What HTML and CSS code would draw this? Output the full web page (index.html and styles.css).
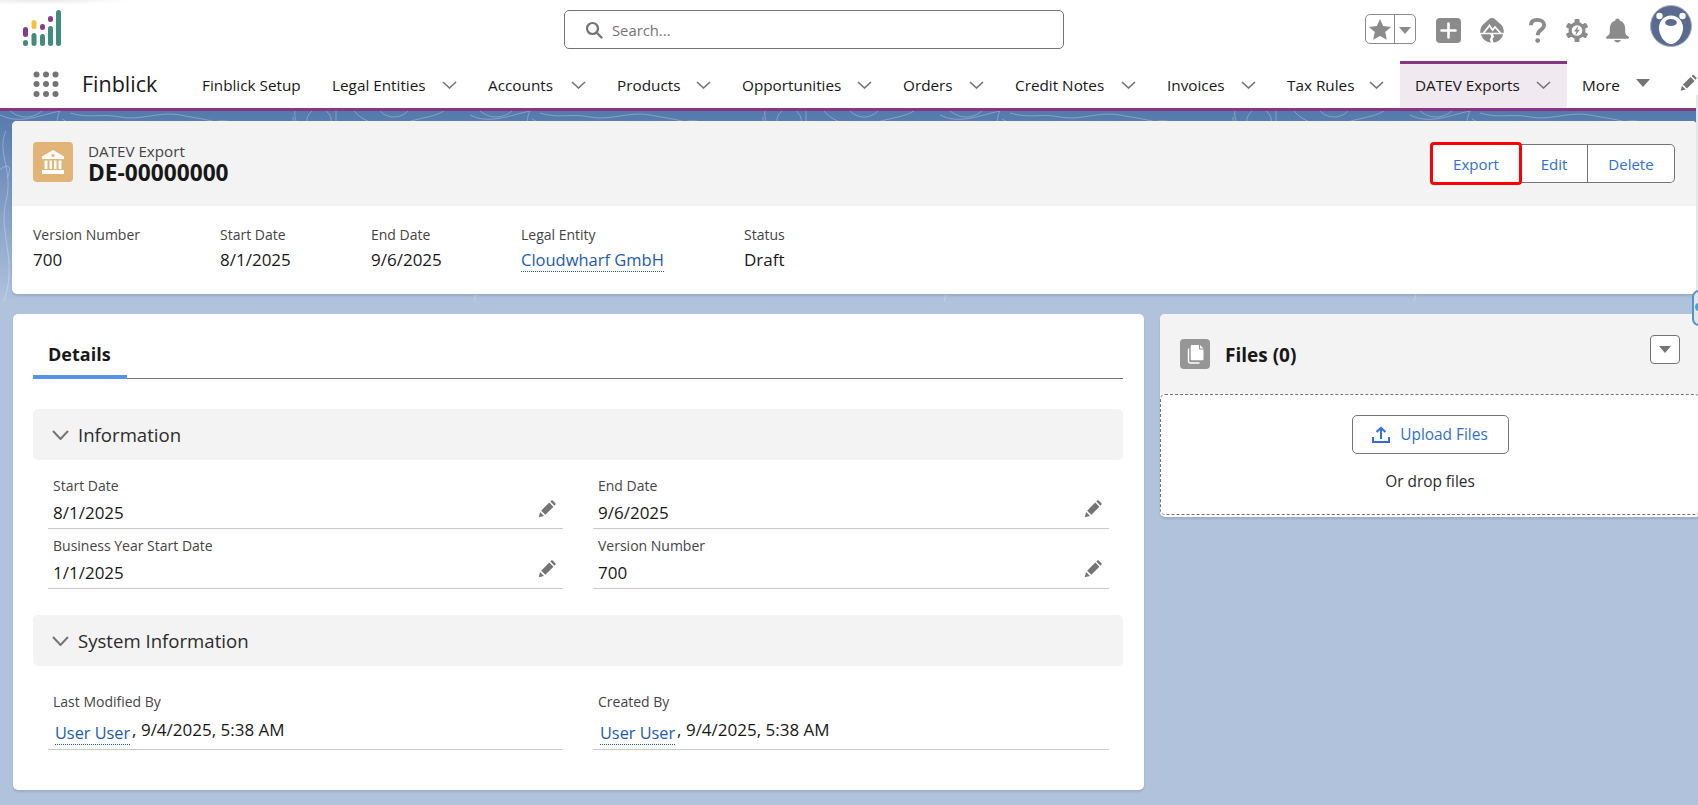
FILE: index.html
```html
<!DOCTYPE html>
<html lang="en">
<head>
<meta charset="utf-8">
<title>DATEV Export DE-00000000</title>
<link rel="stylesheet" href="styles.css">
</head>
<body>
<div class="app">
  <header class="topbar">
    <div class="logo-cell">
      <svg class="logo" width="40" height="38" viewBox="0 0 40 38">
        <g fill="none" stroke-width="5" stroke-linecap="round">
          <path stroke="#8a3a8c" d="M3.5 20.5v5"/>
          <path stroke="#438b7e" d="M3.5 33.5v1"/>
          <path stroke="#f2c23e" d="M12 13.5v4"/>
          <path stroke="#438b7e" d="M12 26.500v8"/>
          <path stroke="#8a3a8c" d="M20.500 17.500v1"/>
          <path stroke="#438b7e" d="M20.500 27.500v7"/>
          <path stroke="#8a3a8c" d="M28.500 9.500v1"/>
          <path stroke="#438b7e" d="M28.500 19.500v15"/>
          <path stroke="#438b7e" d="M36.500 3.500v31"/>
        </g>
      </svg>
    </div>
    <div class="search">
      <svg class="search-icon" width="18" height="18" viewBox="0 0 18 18"><circle cx="7.500" cy="7.500" r="5.500" fill="none" stroke="#747474" stroke-width="2.200"/><path d="M11.500 11.500l5 5" stroke="#747474" stroke-width="2.400" stroke-linecap="round"/></svg>
      <span class="search-text">Search...</span>
    </div>
    <div class="actions">
      <div class="fav">
        <span class="fav-star"><svg width="22" height="21" viewBox="0 0 22 21"><path fill="#8b8b8b" d="M11 0l3.200 7.100 7.800.8-5.800 5.200 1.600 7.700L11 16.900l-6.800 3.900 1.600-7.700L0 7.900l7.800-.8z"/></svg></span>
        <span class="fav-caret"></span>
      </div>
      <svg class="ic-plus" width="25" height="25" viewBox="0 0 25 25"><rect width="25" height="25" rx="4" fill="#8b8b8b"/><path d="M12.500 5.500v14M5.500 12.500h14" stroke="#fff" stroke-width="2.600" stroke-linecap="round"/></svg>
      <svg class="ic-trail" width="24" height="25" viewBox="0 0 24 25"><path fill="#8b8b8b" d="M12 0c2.500 0 3.500 1.500 5 3 2 2 5 3.500 6 6.500.6 1.800.9 3.500.9 5.300H.1C.1 13 .4 11.300 1 9.500 2 6.500 5 5 7 3c1.500-1.500 2.500-3 5-3z"/><path fill="#8b8b8b" d="M.9 16.300h9.400l1 2.500-1.500 2.500 1 3.300C6 24 2.300 21 .9 16.300zM13 16.300h10.200c-1.300 4.700-5 7.800-9.700 8.300l-1-3.300 1.600-2.500z"/><path fill="none" stroke="#fff" stroke-width="1.800" d="M3.500 15l6-7.500 3 4.500 2.500-3 5.500 6"/></svg>
      <svg class="ic-help" width="17" height="25" viewBox="0 0 17 25"><path fill="none" stroke="#8b8b8b" stroke-width="3.800" d="M1.900 7.200c0-3.700 2.800-5.300 6.400-5.300 3.900 0 6.800 2 6.800 5.200 0 4.900-6.400 4.700-6.400 10.200"/><circle cx="8.700" cy="22.600" r="2.400" fill="#8b8b8b"/></svg>
      <svg class="ic-gear" width="22" height="23" viewBox="0 0 22 23"><g fill="#8b8b8b"><circle cx="11" cy="11.500" r="8.500"/><rect x="8.500" y="0" width="5" height="23" rx="1"/><rect x="8.500" y="0" width="5" height="23" rx="1" transform="rotate(60 11 11.500)"/><rect x="8.500" y="0" width="5" height="23" rx="1" transform="rotate(120 11 11.500)"/></g><circle cx="11" cy="11.500" r="5.300" fill="#fff"/><path fill="#8b8b8b" d="M12.300 6.800 8 12.500h2.400l-1 4.300 4.400-6h-2.500z"/></svg>
      <svg class="ic-bell" width="23" height="25" viewBox="0 0 24 25"><path fill="#8b8b8b" d="M12 0c1.300 0 2.300.9 2.500 2.200C18 3.300 20 6.300 20 10v4c0 2 1.200 3.300 3 4.500.8.500 1 1 1 1.500s-.4 1-1 1H1c-.6 0-1-.5-1-1s.2-1 1-1.500C2.800 17.300 4 16 4 14v-4c0-3.700 2-6.700 5.500-7.800C9.700.9 10.700 0 12 0z"/><path fill="#8b8b8b" d="M8.500 22.500h7c-.5 1.500-2 2.500-3.500 2.500s-3-1-3.500-2.500z"/></svg>
      <svg class="avatar" width="42" height="42" viewBox="0 0 42 42"><circle cx="21" cy="21" r="20.500" fill="#5a6b8f" stroke="#a8afbd"/><circle cx="9.500" cy="11" r="3.200" fill="#fff"/><circle cx="32.500" cy="11" r="3.200" fill="#fff"/><path fill="#fff" d="M21 10.500c7 0 11 5 12 11 .7 7-5 17.500-12 17.500S8.300 28.500 9 21.500c1-6 5-11 12-11z"/><ellipse cx="21" cy="17.500" rx="5.800" ry="3.600" fill="#5a6b8f"/></svg>
    </div>
  </header>

  <nav class="nav">
    <div class="launcher">
      <svg width="26" height="26" viewBox="0 0 26 26" fill="#747474"><circle cx="3.500" cy="3.500" r="3"/><circle cx="13" cy="3.500" r="3"/><circle cx="22.500" cy="3.500" r="3"/><circle cx="3.500" cy="13" r="3"/><circle cx="13" cy="13" r="3"/><circle cx="22.500" cy="13" r="3"/><circle cx="3.500" cy="23" r="3"/><circle cx="13" cy="23" r="3"/><circle cx="22.500" cy="23" r="3"/></svg>
      <span class="app-name">Finblick</span>
    </div>
    <div class="tabs">
      <a class="tab">Finblick Setup</a>
      <a class="tab">Legal Entities<svg class="chev" viewBox="0 0 15 8"><path d="M1 1l6.500 6L14 1"/></svg></a>
      <a class="tab">Accounts<svg class="chev" viewBox="0 0 15 8"><path d="M1 1l6.500 6L14 1"/></svg></a>
      <a class="tab">Products<svg class="chev" viewBox="0 0 15 8"><path d="M1 1l6.500 6L14 1"/></svg></a>
      <a class="tab">Opportunities<svg class="chev" viewBox="0 0 15 8"><path d="M1 1l6.500 6L14 1"/></svg></a>
      <a class="tab">Orders<svg class="chev" viewBox="0 0 15 8"><path d="M1 1l6.500 6L14 1"/></svg></a>
      <a class="tab">Credit Notes<svg class="chev" viewBox="0 0 15 8"><path d="M1 1l6.500 6L14 1"/></svg></a>
      <a class="tab">Invoices<svg class="chev" viewBox="0 0 15 8"><path d="M1 1l6.500 6L14 1"/></svg></a>
      <a class="tab">Tax Rules<svg class="chev" viewBox="0 0 15 8"><path d="M1 1l6.500 6L14 1"/></svg></a>
      <a class="tab tab-active">DATEV Exports<svg class="chev" viewBox="0 0 15 8"><path d="M1 1l6.500 6L14 1"/></svg></a>
      <a class="tab tab-more">More<span class="more-caret"></span></a>
      <svg class="nav-pencil" width="17" height="18" viewBox="0 0 24 24"><use href="#pencil"/></svg>
    </div>
  </nav>

  <main class="main">
    <svg class="contours" width="1698" height="210" aria-hidden="true">
      <defs>
        <pattern id="topo" width="470" height="210" patternUnits="userSpaceOnUse">
          <g fill="none" stroke="#fff" stroke-opacity=".28" stroke-width="1">
            <path d="M10 0c10 8 22 8 32 0"/>
            <path d="M0 4c20 10 40 0 60-4"/>
            <path d="M60 0c-6 10 2 22-14 30"/>
            <path d="M62 8c10 8 30 2 50 8s30-6 50-4 30 6 48 0 30 2 40 8"/>
            <path d="M70 2c20 6 30 0 50 4s40-6 60-2 30 4 50 12"/>
            <path d="M295 0c-2 8 6 18 3 20s-5-8-5-14"/>
            <path d="M312 0a12 12 0 0 0 14 20 12 12 0 0 0 0-20"/>
            <path d="M336 0v20"/>
            <path d="M354 0c10 12 30 18 50 12s30-6 40-12"/>
            <path d="M380 0c8 8 20 8 28 0"/>
            <path d="M6 20c-10 20 8 40 0 70s12 60-2 100"/>
            <path d="M-2 60c10-8 14-6 10 6"/>
          </g>
        </pattern>
      </defs>
      <rect width="1698" height="210" fill="url(#topo)"/>
    </svg>

    <section class="card highlights">
      <div class="hl-head">
        <div class="hl-title">
          <svg class="obj-icon" width="40" height="40" viewBox="0 0 40 40"><rect width="40" height="40" rx="4" fill="#e2b477"/><path fill="#fff" d="M20 8l11 6.500V17H9v-2.500z"/><circle cx="20" cy="13.500" r="1.600" fill="#e2b477"/><path fill="#fff" d="M11.500 18.500h3V27h-3zM16.500 18.500h2.500V27h-2.500zM21 18.500h2.500V27H21zM25.500 18.500h3V27h-3zM9 28h22v4H9z"/></svg>
          <div class="hl-text">
            <div class="hl-kind">DATEV Export</div>
            <h1 class="hl-name">DE-00000000</h1>
          </div>
        </div>
        <div class="btn-group">
          <button class="btn btn-export">Export</button>
          <button class="btn btn-edit">Edit</button>
          <button class="btn btn-delete">Delete</button>
        </div>
      </div>
      <div class="hl-fields">
        <div><div class="lbl">Version Number</div><div class="val">700</div></div>
        <div><div class="lbl">Start Date</div><div class="val">8/1/2025</div></div>
        <div><div class="lbl">End Date</div><div class="val">9/6/2025</div></div>
        <div><div class="lbl">Legal Entity</div><div class="val val-link"><a class="link">Cloudwharf GmbH</a></div></div>
        <div><div class="lbl">Status</div><div class="val">Draft</div></div>
      </div>
    </section>

    <div class="columns">
      <section class="card details">
        <div class="tabbar"><span class="dtab">Details</span></div>

        <div class="sec-head">
          <svg class="sec-chev" viewBox="0 0 17 10"><path d="M1 1l7.500 8L16 1"/></svg>
          <span>Information</span>
        </div>
        <div class="fields">
          <div class="field"><div class="lbl">Start Date</div><div class="val">8/1/2025</div><svg class="pencil" width="18" height="18" viewBox="0 0 24 24"><use href="#pencil"/></svg></div>
          <div class="field"><div class="lbl">End Date</div><div class="val">9/6/2025</div><svg class="pencil" width="18" height="18" viewBox="0 0 24 24"><use href="#pencil"/></svg></div>
          <div class="field"><div class="lbl">Business Year Start Date</div><div class="val">1/1/2025</div><svg class="pencil" width="18" height="18" viewBox="0 0 24 24"><use href="#pencil"/></svg></div>
          <div class="field"><div class="lbl">Version Number</div><div class="val">700</div><svg class="pencil" width="18" height="18" viewBox="0 0 24 24"><use href="#pencil"/></svg></div>
        </div>

        <div class="sec-head sec-system">
          <svg class="sec-chev" viewBox="0 0 17 10"><path d="M1 1l7.500 8L16 1"/></svg>
          <span>System Information</span>
        </div>
        <div class="fields fields-system">
          <div class="field field-sys"><div class="lbl">Last Modified By</div><div class="val val-sys"><a class="link">User User</a><span class="comma">,</span> 9/4/2025, 5:38 AM</div></div>
          <div class="field field-sys"><div class="lbl">Created By</div><div class="val val-sys"><a class="link">User User</a><span class="comma">,</span> 9/4/2025, 5:38 AM</div></div>
        </div>
      </section>

      <section class="card files">
        <div class="files-head">
          <svg class="files-icon" width="30" height="30" viewBox="0 0 30 30"><rect width="30" height="30" rx="4" fill="#969696"/><path fill="#fff" d="M12 6h7v4.500h4.500V20c0 .8-.6 1.300-1.300 1.300H12c-.7 0-1.300-.5-1.300-1.300V7.300C10.700 6.500 11.300 6 12 6zM20 6l3.500 3.500H20z"/><path fill="none" stroke="#fff" stroke-width="1.400" d="M8.500 9.500v12.800c0 1 .8 1.700 1.700 1.700h9.300"/></svg>
          <h2 class="files-title">Files (0)</h2>
          <button class="menu-btn"><span class="caret"></span></button>
        </div>
        <div class="drop">
          <button class="upload">
            <svg width="18" height="18" viewBox="0 0 18 18"><path fill="none" stroke="#2f6fd6" stroke-width="2" d="M1 11v5h16v-5"/><path fill="none" stroke="#2f6fd6" stroke-width="2" d="M9 13V2M4.500 6L9 1.800 13.500 6"/></svg>
            <span>Upload Files</span>
          </button>
          <div class="drop-text">Or drop files</div>
        </div>
      </section>
    </div>

    <div class="edge-strip"></div>
    <div class="edge-handle"><span class="edge-dot"></span></div>
  </main>
</div>
<svg width="0" height="0" class="defs"><defs><g id="pencil" fill="#747474"><path d="M1 23l1.800-7 5.200 5.200z"/><path d="M4.200 14.200 15 3.400l5.600 5.600L9.800 19.800z"/><path d="M16.500 2l1-1c.7-.7 1.700-.7 2.400 0l3.100 3.100c.7.700.7 1.700 0 2.400l-1 1z"/></g></defs></svg>
</body>
</html>
```

FILE: styles.css
```css
* { box-sizing: border-box; }
html, body { margin: 0; padding: 0; }
body {
  font-family: "Open Sans", "Noto Sans", sans-serif;
  color: #181818;
  background: #b0c2dc;
  overflow: hidden;
}
.defs { position: absolute; }
.app { width: 1698px; height: 805px; display: flex; flex-direction: column; overflow: hidden; }

/* top bar */
.topbar {
  height: 61px;
  flex: none;
  display: grid;
  grid-template-columns: 564px 500px 1fr;
  background: #fff radial-gradient(ellipse 90px 5px at 40px 0, #e8e8e8, #fff);
}
.logo-cell { padding: 9px 0 0 22px; }
.logo { display: block; }
.search {
  margin-top: 10px;
  height: 39px;
  border: 1px solid #747474;
  border-radius: 5px;
  display: flex;
  align-items: center;
  padding-left: 20px;
}
.search-icon { flex: none; }
.search-text { margin: 1px 0 0 9px; font-size: 14.800px; color: #747474; }
.actions { display: flex; align-items: flex-start; padding-left: 301px; }
.fav {
  margin-top: 14px;
  width: 51px;
  height: 30px;
  border: 1px solid #8b8b8b;
  border-radius: 5px;
  display: flex;
}
.fav-star { width: 29px; display: flex; align-items: center; justify-content: center; border-right: 1px solid #8b8b8b; }
.fav-caret { width: 0; height: 0; margin: 12px 0 0 4px; border: 6px solid transparent; border-top: 7px solid #8b8b8b; border-bottom: 0; }
.ic-plus { margin: 18px 0 0 20px; }
.ic-trail { margin: 18px 0 0 19px; }
.ic-help { margin: 18px 0 0 25px; }
.ic-gear { margin: 19px 0 0 20px; }
.ic-bell { margin: 18px 0 0 18px; }
.avatar { margin: 5px 0 0 21px; }

/* nav */
.nav {
  height: 50px;
  flex: none;
  display: flex;
  background: #fff;
  border-bottom: 3px solid #85387f;
}
.launcher { width: 187px; flex: none; display: flex; align-items: center; padding: 0 0 2px 33px; }
.app-name { margin-left: 23px; font-size: 21.500px; line-height: 28px; color: #181818; }
.tabs {
  flex: 1;
  display: grid;
  grid-template-columns: 130px 156px 129px 125px 161px 112px 152px 120px 128px 167px 100px 30px;
  align-items: stretch;
}
.tab {
  display: flex;
  align-items: center;
  justify-content: space-between;
  padding: 0 16px 3px 15px;
  font-size: 15.300px;
  color: #181818;
  white-space: nowrap;
  border-top: 3px solid transparent;
}
.tab-active { background: #f0e9f0; border-top-color: #85387f; }
.tab-more { justify-content: flex-start; }
.more-caret { width: 0; height: 0; margin: -3px 0 0 16px; border: 7.500px solid transparent; border-top: 8px solid #747474; border-bottom: 0; }
.chev { width: 15px; height: 8px; flex: none; fill: none; stroke: #747474; stroke-width: 1.600; }
.nav-pencil { align-self: center; margin: 0 0 3px 13px; }

/* main */
.main {
  position: relative;
  flex: 1;
  padding: 10px 1px 0 12px;
  background: linear-gradient(#5479ad 0, #b0c2dc 190px);
}
.contours { position: absolute; left: 0; top: 0; }
.card { position: relative; background: #fff; border-radius: 5px; box-shadow: 0 2px 2px rgba(24, 24, 24, .12); }

/* highlights */
.highlights { overflow: hidden; }
.hl-head { height: 85px; background: #f3f3f3; display: flex; justify-content: space-between; padding: 21px 22px 0 21px; }
.hl-title { display: flex; gap: 15px; align-items: flex-start; }
.obj-icon { display: block; }
.hl-text { margin-top: -1px; }
.hl-kind { font-size: 15.200px; line-height: 20px; color: #444; }
.hl-name { margin: 0; font-size: 22.700px; line-height: 24px; font-weight: 700; color: #181818; }
.btn-group { display: flex; height: 39px; margin-top: 2px; border: 1px solid #747474; border-left: 0; border-radius: 5px; background: #fff; }
.btn {
  border: 0;
  background: #fff;
  font-family: inherit;
  font-size: 15px;
  color: #2f6fd6;
  padding: 0;
}
.btn-export { width: 90px; margin: -2px 0; outline: 3px solid #ff0000; outline-offset: -2px; position: relative; border-radius: 3px; }
.btn-edit { width: 66px; }
.btn-delete { width: 87px; border-left: 1px solid #747474; border-radius: 0 5px 5px 0; }
.hl-fields { display: grid; grid-template-columns: 187px 151px 150px 223px 1fr; padding: 19px 22px 22px 21px; }
.lbl { font-size: 14px; line-height: 20px; color: #444; }
.val { font-size: 17px; line-height: 24px; margin-top: 3px; color: #181818; }
.val-link { margin-bottom: -1px; }
.link { color: #1e5bb0; border-bottom: 1px dotted #1e5bb0; font-size: 16.500px; }

/* columns */
.columns { display: grid; grid-template-columns: 1131px 540px; gap: 16px; margin: 20px 0 0 1px; align-items: start; }
.details { height: 476px; padding: 0 21px 0 20px; }
.tabbar { height: 65px; border-bottom: 1px solid #747474; display: flex; align-items: flex-end; }
.dtab {
  width: 94px;
  height: 46px;
  margin-bottom: -1px;
  padding: 9px 0 0 15px;
  border-bottom: 4px solid #5692ea;
  font-size: 18px;
  line-height: 24px;
  font-weight: 700;
}
.sec-head {
  margin-top: 30px;
  height: 51px;
  background: #f3f3f3;
  border-radius: 5px;
  display: flex;
  align-items: center;
  padding: 0 0 0 19px;
  font-size: 18.600px;
  color: #2b2b2b;
}
.sec-system { margin-top: 26px; }
.sec-chev { width: 17px; height: 10px; margin-right: 9px; fill: none; stroke: #747474; stroke-width: 2; flex: none; }
.fields { display: grid; grid-template-columns: 515px 516px; gap: 0 30px; margin: 9px 0 0 15px; }
.field { position: relative; height: 60px; padding: 7px 0 0 5px; border-bottom: 1px solid #c9c9c9; }
.field .val { margin-top: 5px; }
.pencil { position: absolute; right: 7px; top: 31px; }
.fields-system { margin-top: 0; }
.field-sys { height: 84px; padding-top: 26px; }
.field-sys .val { margin-top: 6px; }
.val-sys .link { margin: 0 0 0 2px; position: relative; top: 3px; font-size: 16.300px; }
.comma { margin-left: 2px; }

/* files */
.files { height: 203px; overflow: hidden; }
.files-head { height: 80px; background: #f3f3f3; position: relative; display: flex; padding: 25px 0 0 20px; }
.files-icon { flex: none; }
.files-title { margin: 1px 0 0 15px; font-size: 19px; line-height: 30px; font-weight: 700; }
.menu-btn { position: absolute; left: 490px; top: 21px; width: 30px; height: 29px; padding: 0; border: 1px solid #747474; border-radius: 4px; background: #fff; display: flex; align-items: center; justify-content: center; }
.caret { width: 0; height: 0; border: 6px solid transparent; border-top: 7px solid #747474; border-bottom: 0; }
.drop { height: 121px; border: 1px dashed #747474; border-radius: 5px; display: flex; flex-direction: column; align-items: center; padding-top: 20px; }
.upload {
  width: 157px;
  height: 39px;
  border: 1px solid #747474;
  border-radius: 5px;
  background: #fff;
  display: flex;
  align-items: center;
  justify-content: center;
  gap: 10px;
  font-family: inherit;
  font-size: 15.400px;
  color: #2f6fd6;
  padding: 0;
}
.drop-text { margin-top: 18px; font-size: 15.400px; line-height: 20px; color: #2b2b2b; }

/* right edge */
.edge-strip { position: absolute; right: 0; top: -16px; width: 2px; height: 200px; background: #e3e8ef; }
.edge-handle { position: absolute; right: -8px; top: 179px; width: 14px; height: 36px; border: 2px solid #4f94d0; border-radius: 7px; background: #e6e6e6; }
.edge-dot { position: absolute; left: 1px; top: 11px; width: 8px; height: 8px; border-radius: 50%; background: #3ba7dc; }
```
